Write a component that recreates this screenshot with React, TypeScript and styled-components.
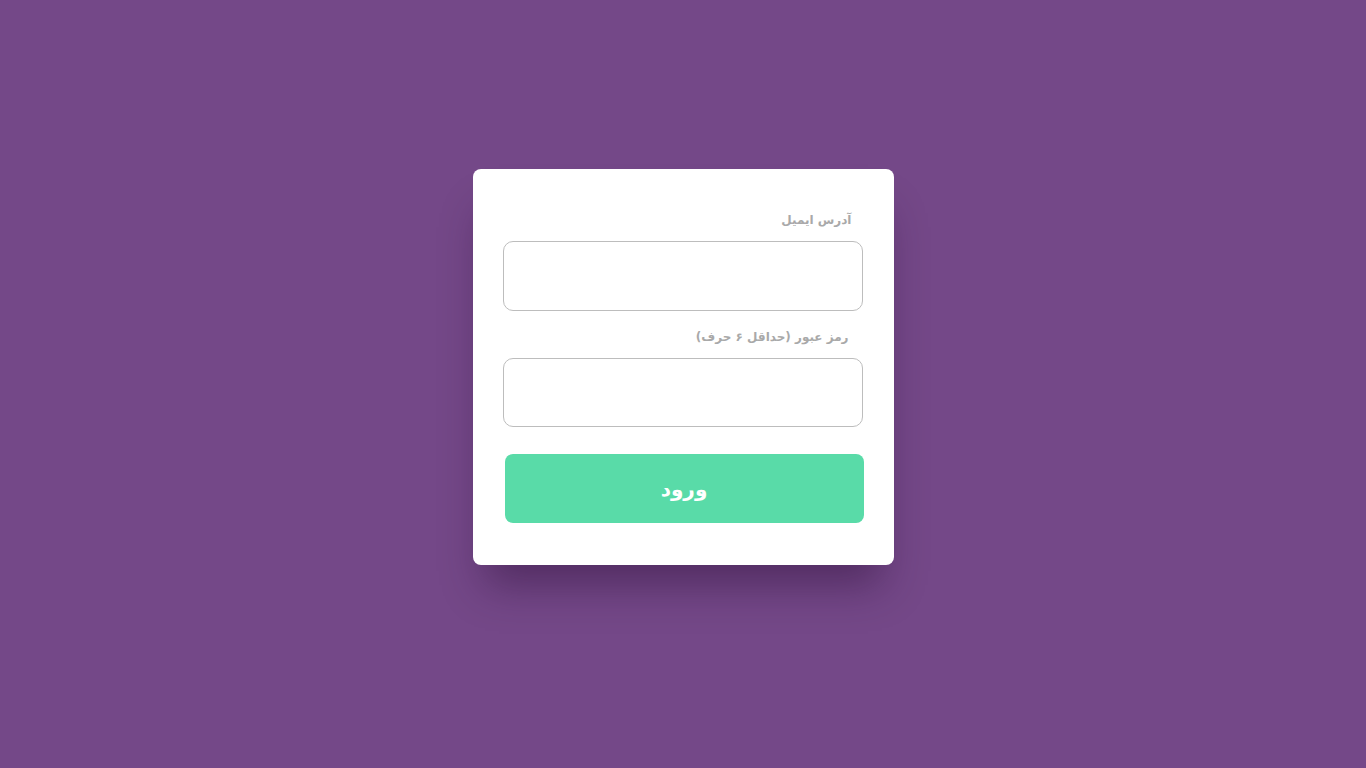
import styled, { createGlobalStyle } from "styled-components";

const GlobalStyle = createGlobalStyle`
  html, body {
    margin: 0;
    padding: 0;
    height: 100%;
    background: #744888;
  }

  #root {
    height: 100%;
  }
`;

const Page = styled.div`
  display: flex;
  justify-content: center;
  align-items: flex-start;
  box-sizing: border-box;
  height: 768px;
  padding-top: 169px;
  background: #744888;
  font-family: "DejaVu Sans", "Noto Sans", sans-serif;
`;

const Card = styled.form`
  display: flex;
  flex-direction: column;
  box-sizing: border-box;
  width: 421px;
  padding: 41px 31px 42px 30px;
  background: #fff;
  border-radius: 8px;
  box-shadow: 0 32px 40px -12px rgba(40, 10, 50, 0.45);
  direction: rtl;
`;

const Label = styled.label<{ $pad: number }>`
  display: block;
  height: 20px;
  line-height: 20px;
  margin-bottom: 11px;
  padding-right: ${(p) => p.$pad}px;
  font-size: 12px;
  font-weight: bold;
  color: #a9a9a9;
  text-align: right;
`;

const Input = styled.input<{ $h: number }>`
  box-sizing: border-box;
  width: 360px;
  height: ${(p) => p.$h}px;
  border: 1px solid #bdbdbd;
  border-radius: 10px;
  background: #fff;
  outline: none;
`;

const Gap = styled.div<{ $h: number }>`
  height: ${(p) => p.$h}px;
`;

const Submit = styled.button`
  box-sizing: border-box;
  width: 359px;
  height: 69px;
  margin-right: -1px;
  border: none;
  border-radius: 8px;
  background: #59dba8;
  color: #fff;
  font-family: "DejaVu Sans", "Noto Sans", sans-serif;
  font-size: 20px;
  font-weight: bold;
  cursor: pointer;
`;

export default function App() {
  return (
    <>
      <GlobalStyle />
      <Page>
        <Card onSubmit={(e) => e.preventDefault()}>
          <Label $pad={11}>آدرس ایمیل</Label>
          <Input type="email" $h={70} />
          <Gap $h={16} />
          <Label $pad={14}>رمز عبور (حداقل ۶ حرف)</Label>
          <Input type="password" $h={69} />
          <Gap $h={27} />
          <Submit type="submit">ورود</Submit>
        </Card>
      </Page>
    </>
  );
}
